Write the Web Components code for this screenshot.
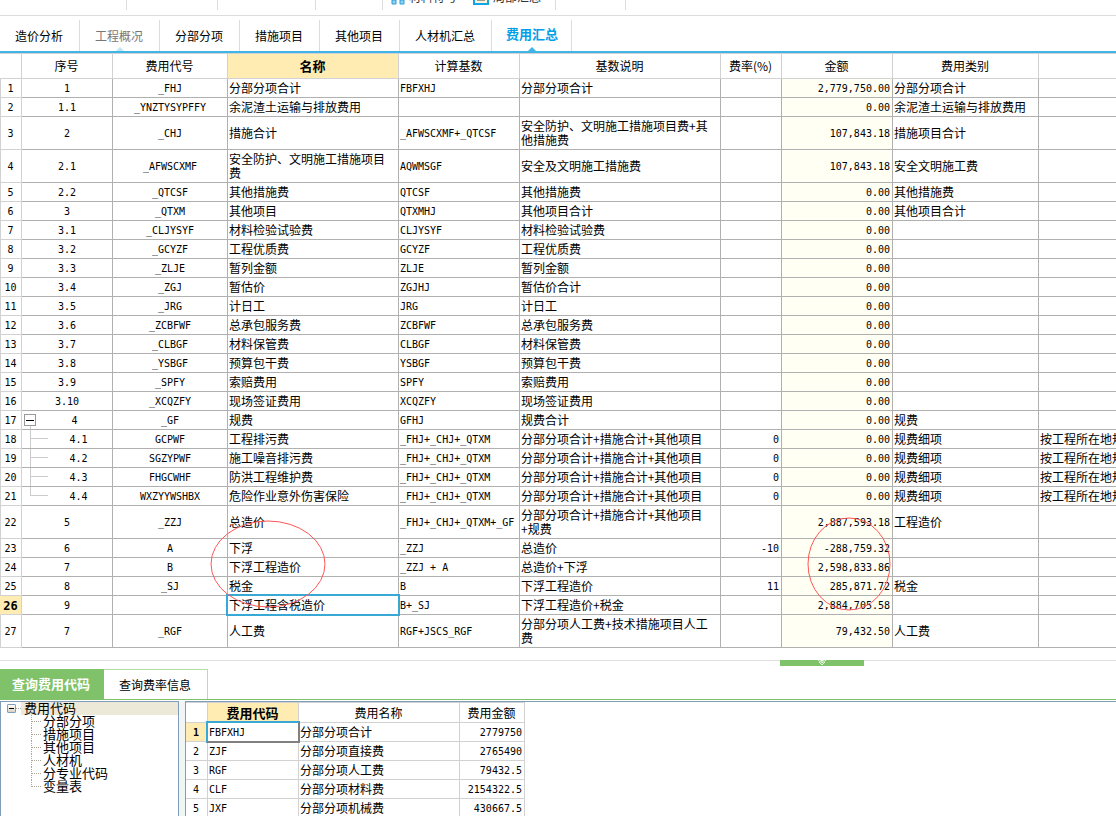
<!DOCTYPE html>
<html lang="zh-CN">
<head>
<meta charset="utf-8">
<title>费用汇总</title>
<style>
  html, body { margin: 0; height: 100%; background: #fff; }
  body {
    --cjk: "Noto Sans CJK SC", sans-serif;
    --mono: "DejaVu Sans Mono", "Noto Sans CJK SC", monospace;
    --line: #b0b0b0;
    --soft: #d2d2d2;
    --blue: #3fb4e5;
    --pick: #38a8d4;
    --gold: #ffecb3;
    --green: #80c269;
    font: 12px/14px var(--cjk);
    color: #000;
    overflow: hidden;
  }
</style>
</head>
<body>
<cost-app></cost-app>

<script>
const define = (name, html, setup) => customElements.define(name, class extends HTMLElement {
  connectedCallback() {
    if (this.shadowRoot) return;
    const root = this.attachShadow({ mode: 'open' });
    const t = document.createElement('template');
    t.innerHTML = html;
    root.append(t.content.cloneNode(true));
    if (setup) setup(root, this);
  }
});

/* ---- toolbar strip, scrolled mostly out of view ---- */
define('tool-bar', `
<style>
  :host { display: flex; align-items: flex-end; height: 10px; padding-bottom: 5px; border-bottom: 1px solid #dcdcdc; overflow: hidden; flex: none; }
  .group { box-sizing: border-box; height: 30px; border-right: 1px solid #dcdcdc; display: flex; align-items: flex-end; gap: 16px; padding: 0 8px 5px; }
  .g1 { width: 127px; } .g2 { width: 91px; } .g3 { width: 98px; } .g4 { width: 67px; } .g6 { width: 70px; }
  .g5 { width: 173px; }
  button { all: unset; display: flex; gap: 4px; align-items: flex-end; font: 12px/14px var(--cjk); color: #333; white-space: nowrap; }
  svg { display: block; }
  span { padding-bottom: 1px; }
</style>
<div class="group g1"></div><div class="group g2"></div><div class="group g3"></div><div class="group g4"></div>
<div class="group g5">
  <button><svg width="14" height="14" viewBox="0 0 14 14"><path d="M3 0v9M11 0v9" stroke="#3fa9dc" stroke-width="2"/><path d="M1 9h4v4H1zM9 9h4v4H9z" fill="#8fd3f0" stroke="#2f9bd3"/></svg><span>材料符号</span></button>
  <button><svg width="16" height="14" viewBox="0 0 16 14"><rect x="1" y="0" width="14" height="13" fill="#fff3d6" stroke="#12a5ea" stroke-width="2"/><path d="M4 9h8" stroke="#999" stroke-width="2"/></svg><span>局部汇总</span></button>
</div>
<div class="group g6"></div>`);

/* ---- main page tabs ---- */
define('main-tabs', `
<style>
  :host { display: flex; align-items: flex-end; height: 35px; border-bottom: 2px solid var(--blue); flex: none; }
  button { all: unset; box-sizing: border-box; height: 31px; padding: 0 16px 0 15px; border-right: 1px solid #dcdcdc; position: relative; font: 12px/14px var(--cjk); text-align: center; white-space: nowrap; }
  .dim { color: #777; }
  .on { padding: 0 13px 3px 14px; font-size: 13px; font-weight: 700; color: #00a0e9; }
  .dim::after, .on::after { content: ""; position: absolute; left: 50%; bottom: 0; margin-left: -4px; border: 4px solid transparent; border-top: 0; border-bottom-color: var(--blue); }
  .dim::after { border-bottom-color: #c0e6f7; }
</style>
<button>造价分析</button><button class="dim">工程概况</button><button>分部分项</button><button>措施项目</button><button>其他项目</button><button>人材机汇总</button><button class="on">费用汇总</button>`);

/* ---- cost summary grid ---- */
const rows = [
  ['1','_FHJ','分部分项合计','FBFXHJ','分部分项合计','','2,779,750.00','分部分项合计'],
  ['1.1','_YNZTYSYPFFY','余泥渣土运输与排放费用','','','','0.00','余泥渣土运输与排放费用'],
  ['2','_CHJ','措施合计','_AFWSCXMF+_QTCSF','安全防护、文明施工措施项目费+其他措施费','','107,843.18','措施项目合计'],
  ['2.1','_AFWSCXMF','安全防护、文明施工措施项目费','AQWMSGF','安全及文明施工措施费','','107,843.18','安全文明施工费'],
  ['2.2','_QTCSF','其他措施费','QTCSF','其他措施费','','0.00','其他措施费'],
  ['3','_QTXM','其他项目','QTXMHJ','其他项目合计','','0.00','其他项目合计'],
  ['3.1','_CLJYSYF','材料检验试验费','CLJYSYF','材料检验试验费','','0.00',''],
  ['3.2','_GCYZF','工程优质费','GCYZF','工程优质费','','0.00',''],
  ['3.3','_ZLJE','暂列金额','ZLJE','暂列金额','','0.00',''],
  ['3.4','_ZGJ','暂估价','ZGJHJ','暂估价合计','','0.00',''],
  ['3.5','_JRG','计日工','JRG','计日工','','0.00',''],
  ['3.6','_ZCBFWF','总承包服务费','ZCBFWF','总承包服务费','','0.00',''],
  ['3.7','_CLBGF','材料保管费','CLBGF','材料保管费','','0.00',''],
  ['3.8','_YSBGF','预算包干费','YSBGF','预算包干费','','0.00',''],
  ['3.9','_SPFY','索赔费用','SPFY','索赔费用','','0.00',''],
  ['3.10','_XCQZFY','现场签证费用','XCQZFY','现场签证费用','','0.00',''],
  ['4','_GF','规费','GFHJ','规费合计','','0.00','规费'],
  ['4.1','GCPWF','工程排污费','_FHJ+_CHJ+_QTXM','分部分项合计+措施合计+其他项目','0','0.00','规费细项','按工程所在地规定'],
  ['4.2','SGZYPWF','施工噪音排污费','_FHJ+_CHJ+_QTXM','分部分项合计+措施合计+其他项目','0','0.00','规费细项','按工程所在地规定'],
  ['4.3','FHGCWHF','防洪工程维护费','_FHJ+_CHJ+_QTXM','分部分项合计+措施合计+其他项目','0','0.00','规费细项','按工程所在地规定'],
  ['4.4','WXZYYWSHBX','危险作业意外伤害保险','_FHJ+_CHJ+_QTXM','分部分项合计+措施合计+其他项目','0','0.00','规费细项','按工程所在地规定'],
  ['5','_ZZJ','总造价','_FHJ+_CHJ+_QTXM+_GF','分部分项合计+措施合计+其他项目+规费','','2,887,593.18','工程造价'],
  ['6','A','下浮','_ZZJ','总造价','-10','-288,759.32',''],
  ['7','B','下浮工程造价','_ZZJ + A','总造价+下浮','','2,598,833.86',''],
  ['8','_SJ','税金','B','下浮工程造价','11','285,871.72','税金'],
  ['9','','下浮工程含税造价','B+_SJ','下浮工程造价+税金','','2,884,705.58',''],
  ['7','_RGF','人工费','RGF+JSCS_RGF','分部分项人工费+技术措施项目人工费','','79,432.50','人工费'],
];
const kinds = ['no code', 'code', 'name', 'base', 'desc', 'num', 'num sum', 'kind', 'note'];
define('cost-grid', `
<style>
  :host { display: block; position: relative; overflow: hidden; flex: none; }
  table { width: 100%; table-layout: fixed; border-collapse: separate; border-spacing: 0; border-top: 1px solid var(--soft); font: 12px/14px var(--cjk); }
  th, td { padding: 2px 2px 2px 1px; height: 14px; border: 0 solid var(--line); border-width: 0 1px 1px 0; text-align: left; vertical-align: middle; font-weight: 400; }
  td:last-child { white-space: nowrap; overflow: hidden; }
  tr > :last-child { border-right: 0; }
  thead th { height: 20px; text-align: center; border-color: var(--soft); }
  thead th.pick { background: var(--gold); font-size: 13px; font-weight: 700; }
  tbody th { font: 10px/14px var(--mono); text-align: center; padding: 3px 1px 1px 0; border-color: var(--soft); border-left: 1px solid var(--soft); }
  tbody tr.cur th { background: var(--gold); font-size: 12px; font-weight: 700; border-left-color: var(--gold); }
  .code, .base, .num { font: 10px/14px var(--mono); padding-top: 3px; padding-bottom: 1px; }
  .code { text-align: center; padding-right: 1px; }
  .base { white-space: pre; }
  .num { text-align: right; padding-right: 2px; }
  .sum { background: #fffff4; }
  .root, .leaf { position: relative; }
  .no.root { padding-left: 16px; }
  .no.leaf { padding-left: 24px; background: linear-gradient(#ccc, #ccc) 8px 0 / 1px 100% no-repeat, linear-gradient(#ccc, #ccc) 8px 8px / 18px 1px no-repeat; }
  .no.leaf.end { background-size: 1px 8px, 18px 1px; }
  .root::after { content: ""; position: absolute; left: 8px; bottom: 0; width: 1px; height: 3px; background: #ccc; }
  .root button { all: unset; position: absolute; left: 2px; top: 3px; width: 10px; height: 10px; border: 1px solid #999; background: linear-gradient(#000, #000) center / 8px 1px no-repeat #fff; }
  .cell { position: relative; }
  .cell::after { content: ""; position: absolute; inset: -2px; border: 2px solid var(--pick); }
  svg { position: absolute; left: 0; top: 0; width: 892px; height: 100%; fill: none; stroke: #f55; pointer-events: none; }
</style>
<table>
  <colgroup><col style="width:22px"><col style="width:91px"><col style="width:115px"><col style="width:171px"><col style="width:121px"><col style="width:201px"><col style="width:61px"><col style="width:111px"><col style="width:146px"><col></colgroup>
  <thead><tr><th></th><th>序号</th><th>费用代号</th><th class="pick">名称</th><th>计算基数</th><th>基数说明</th><th>费率(%)</th><th>金额</th><th>费用类别</th><th></th></tr></thead>
  <tbody></tbody>
</table>
<svg aria-hidden="true"><ellipse cx="268" cy="511" rx="57" ry="43"/><ellipse cx="849" cy="511" rx="41" ry="46"/></svg>`, root => {
  const body = root.querySelector('tbody');
  rows.forEach((r, i) => {
    const tr = body.insertRow();
    const th = document.createElement('th');
    th.scope = 'row';
    th.textContent = i + 1;
    tr.append(th);
    kinds.forEach((k, c) => {
      const td = tr.insertCell();
      td.className = k;
      td.textContent = r[c] || '';
    });
    const no = tr.cells[1];
    if (r[0] === '4') {
      no.classList.add('root');
      const b = document.createElement('button');
      b.setAttribute('aria-label', '折叠');
      no.append(b);
    }
    if (r[0].startsWith('4.')) no.classList.add('leaf');
    if (r[0] === '4.4') no.classList.add('end');
    if (i === 25) { tr.className = 'cur'; tr.cells[3].classList.add('cell'); }
  });
});

/* ---- splitter between the two panes ---- */
define('pane-splitter', `
<style>
  :host { display: flex; height: 9px; margin-top: 12px; background: linear-gradient(#e0e0e0, #e0e0e0) top / 100% 1px no-repeat; flex: none; }
  button { all: unset; width: 84px; height: 6px; margin-left: 780px; background: var(--green); display: flex; justify-content: center; }
  svg { display: block; }
</style>
<button aria-label="收起"><svg width="10" height="6" viewBox="0 0 10 6"><path d="M1 0l4 3 4-3M2 2l3 3 3-3" fill="none" stroke="#e5f4df"/><path d="M3 0h4L5 2z" fill="#fff"/></svg></button>`);

define('query-tabs', `
<style>
  :host { display: flex; height: 30px; border-bottom: 1px solid var(--green); flex: none; }
  button { all: unset; box-sizing: border-box; height: 30px; padding: 0 16px 0 15px; font: 12px/14px var(--cjk); text-align: center; border: 1px solid #b5dfa6; border-width: 1px 1px 0 0; white-space: nowrap; }
  .on { padding: 0 14px 0 12px; border: 0; background: var(--green); color: #fff; font-size: 13px; font-weight: 700; }
</style>
<button class="on">查询费用代码</button><button>查询费率信息</button>`);

define('code-tree', `
<style>
  :host { display: block; box-sizing: border-box; width: 179px; border: 1px solid #7f9db9; border-bottom: 0; flex: none; font: 13px/11px var(--cjk); }
  ul { list-style: none; margin: 0; padding: 0; }
  .top { display: flex; align-items: center; height: 13px; padding-left: 6px; }
  .top button { all: unset; box-sizing: border-box; width: 9px; height: 9px; border: 1px solid #7b9ebd; border-radius: 1px; background: linear-gradient(#000, #000) center / 5px 1px no-repeat, linear-gradient(#fff, #d8d3c5); }
  .top i { width: 5px; border-top: 1px dotted #aca899; }
  .top span { flex: 1; padding-left: 3px; background: #ece9d8; height: 13px; }
  ul ul { margin-left: 30px; }
  ul ul li { height: 13px; padding-left: 12px; position: relative; }
  ul ul li::before { content: ""; position: absolute; left: 0; top: 0; width: 9px; height: 6px; border: 0 dotted #aca899; border-width: 0 0 1px 1px; }
  ul ul li:not(:last-child)::after { content: ""; position: absolute; left: 0; top: 6px; height: 7px; border-left: 1px dotted #aca899; }
</style>
<ul role="tree"><li role="treeitem" aria-expanded="true"><div class="top"><button aria-label="折叠"></button><i></i><span>费用代码</span></div>
<ul role="group"><li role="treeitem">分部分项</li><li role="treeitem">措施项目</li><li role="treeitem">其他项目</li><li role="treeitem">人材机</li><li role="treeitem">分专业代码</li><li role="treeitem">变量表</li></ul></li></ul>`);

define('code-grid', `
<style>
  :host { display: block; flex: 1; border: 1px solid #7f9db9; border-width: 1px 0 0 1px; overflow: hidden; }
  table { table-layout: fixed; width: 339px; border-collapse: separate; border-spacing: 0; border-top: 1px solid var(--soft); font: 12px/14px var(--cjk); }
  th, td { padding: 2px 2px 2px 1px; height: 14px; border: 0 solid var(--soft); border-width: 0 1px 1px 0; text-align: left; font-weight: 400; }
  thead th { height: 15px; text-align: center; }
  thead .pick { background: var(--gold); font-size: 13px; font-weight: 700; }
  tbody th, td:nth-child(2), td:nth-child(4) { font: 10px/14px var(--mono); padding-top: 3px; padding-bottom: 1px; }
  tbody th { text-align: center; }
  tbody tr:first-child th { background: var(--gold); font-weight: 700; }
  td:nth-child(4) { text-align: right; }
  tbody tr:first-child td:nth-child(2) { position: relative; }
  tbody tr:first-child td:nth-child(2)::after { content: ""; position: absolute; inset: -2px; border: 2px solid #808080; border-top-color: var(--pick); border-left-color: var(--pick); }
</style>
<table>
  <colgroup><col style="width:22px"><col style="width:91px"><col style="width:161px"><col style="width:65px"></colgroup>
  <thead><tr><th></th><th class="pick">费用代码</th><th>费用名称</th><th>费用金额</th></tr></thead>
  <tbody>
    <tr><th scope="row">1</th><td>FBFXHJ</td><td>分部分项合计</td><td>2779750</td></tr>
    <tr><th scope="row">2</th><td>ZJF</td><td>分部分项直接费</td><td>2765490</td></tr>
    <tr><th scope="row">3</th><td>RGF</td><td>分部分项人工费</td><td>79432.5</td></tr>
    <tr><th scope="row">4</th><td>CLF</td><td>分部分项材料费</td><td>2154322.5</td></tr>
    <tr><th scope="row">5</th><td>JXF</td><td>分部分项机械费</td><td>430667.5</td></tr>
  </tbody>
</table>`);

define('cost-app', `
<style>
  :host { display: flex; flex-direction: column; height: 100vh; overflow: hidden; }
  .bottom { display: flex; gap: 6px; flex: 1; min-height: 0; margin-top: 1px; background: #f1f5f6; }
  .bottom > * { background: #fff; }
</style>
<tool-bar></tool-bar>
<main-tabs></main-tabs>
<cost-grid></cost-grid>
<pane-splitter></pane-splitter>
<query-tabs></query-tabs>
<div class="bottom"><code-tree></code-tree><code-grid></code-grid></div>`);
</script>
</body>
</html>
